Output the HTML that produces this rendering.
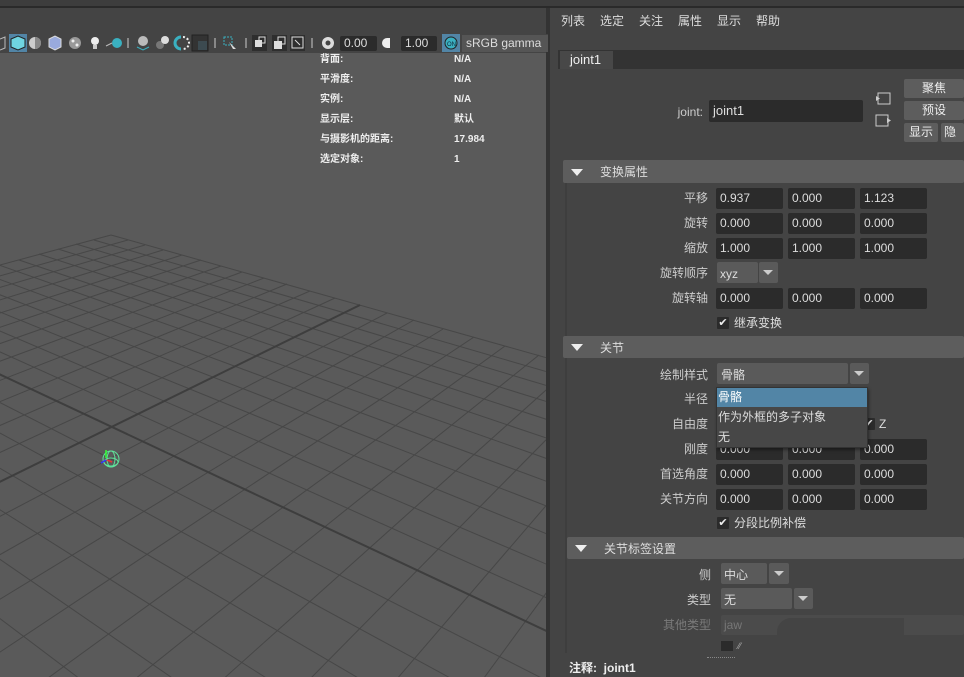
<!DOCTYPE html>
<html style="overflow:hidden;width:964px;height:677px"><head><meta charset="utf-8"><style>
*{margin:0;padding:0;box-sizing:border-box}
body{width:964px;height:677px;overflow:hidden;background:#444;font-family:"Liberation Sans","Noto Sans CJK SC",sans-serif;font-size:12px;color:#ddd;position:relative}
.a{position:absolute}
.t{position:absolute;white-space:nowrap;line-height:14px}
.f{position:absolute;background:#2b2b2b;height:21px;border-radius:2px;color:#ddd;padding:3px 4px;line-height:15px}
.lbl{position:absolute;text-align:right;width:120px;line-height:14px;color:#ccc}
.hud{position:absolute;font-size:10px;font-weight:bold;color:#eee;line-height:12px;white-space:nowrap}
.hdr{position:absolute;background:#5d5d5d;height:22px;border-radius:2px}
.tri{position:absolute;width:0;height:0;border-left:6px solid transparent;border-right:6px solid transparent;border-top:7px solid #eee}
.btn{position:absolute;background:#5d5d5d;border-radius:2px;text-align:center;line-height:19px;color:#eee}
.dd{position:absolute;background:#5a5a5a;height:21px;border-radius:2px}
.cb{position:absolute;width:12px;height:12px;background:#2b2b2b;border-radius:1px;color:#eee;font-size:11px;line-height:12px;text-align:center}
</style></head><body>
<div class="a" style="left:0;top:0;width:964px;height:6px;background:#3d3d3d"></div>
<div class="a" style="left:0;top:6px;width:964px;height:2px;background:#2a2a2a"></div>
<div class="a" style="left:0;top:8px;width:548px;height:45px;background:#444"></div>
<div class="a" style="left:0;top:53px;width:546px;height:624px;background:#5a5a5a"></div>
<svg class="a" style="left:0;top:0" width="546" height="677">
<defs><clipPath id="c"><rect x="0" y="53" width="546" height="624"/></clipPath></defs>
<g clip-path="url(#c)" stroke="#474747" stroke-width="1" fill="none">
<line x1="111" y1="235" x2="-625" y2="434"/><line x1="128" y1="240" x2="-617" y2="449"/><line x1="145" y1="245" x2="-608" y2="465"/><line x1="163" y1="250" x2="-599" y2="483"/><line x1="182" y1="255" x2="-590" y2="501"/><line x1="201" y1="260" x2="-579" y2="521"/><line x1="221" y1="266" x2="-568" y2="543"/><line x1="242" y1="272" x2="-556" y2="566"/><line x1="264" y1="278" x2="-543" y2="591"/><line x1="287" y1="284" x2="-528" y2="618"/><line x1="310" y1="291" x2="-513" y2="648"/><line x1="335" y1="298" x2="-496" y2="681"/>
<line x1="387" y1="313" x2="-456" y2="756"/><line x1="414" y1="320" x2="-433" y2="800"/><line x1="443" y1="329" x2="-408" y2="848"/><line x1="474" y1="337" x2="-379" y2="904"/><line x1="505" y1="346" x2="-347" y2="965"/><line x1="539" y1="355" x2="-310" y2="1036"/><line x1="574" y1="365" x2="-267" y2="1118"/><line x1="610" y1="375" x2="-217" y2="1213"/><line x1="649" y1="386" x2="-159" y2="1325"/><line x1="689" y1="398" x2="-88" y2="1459"/><line x1="732" y1="410" x2="-3" y2="1621"/><line x1="778" y1="423" x2="103" y2="1824"/>
<line x1="111" y1="235" x2="778" y2="423"/><line x1="94" y1="240" x2="771" y2="437"/><line x1="76" y1="244" x2="764" y2="451"/><line x1="58" y1="249" x2="756" y2="467"/><line x1="39" y1="254" x2="748" y2="485"/><line x1="19" y1="260" x2="739" y2="503"/><line x1="-1" y1="265" x2="729" y2="523"/><line x1="-23" y1="271" x2="719" y2="545"/><line x1="-46" y1="277" x2="707" y2="568"/><line x1="-69" y1="284" x2="695" y2="594"/><line x1="-94" y1="291" x2="682" y2="622"/><line x1="-120" y1="298" x2="667" y2="652"/>
<line x1="-176" y1="313" x2="632" y2="724"/><line x1="-206" y1="321" x2="612" y2="766"/><line x1="-238" y1="329" x2="589" y2="813"/><line x1="-272" y1="338" x2="564" y2="866"/><line x1="-307" y1="348" x2="534" y2="927"/><line x1="-345" y1="358" x2="501" y2="997"/><line x1="-384" y1="369" x2="461" y2="1079"/><line x1="-426" y1="380" x2="415" y2="1175"/><line x1="-471" y1="392" x2="360" y2="1289"/><line x1="-519" y1="405" x2="293" y2="1429"/><line x1="-570" y1="419" x2="209" y2="1602"/>
</g>
<g clip-path="url(#c)" stroke="#3e3e3e" stroke-width="2">
<line x1="360" y1="305" x2="-477" y2="716"/><line x1="-148" y1="305" x2="651" y2="680"/>
</g>
<g fill="none" stroke="#5fe39a" stroke-width="1">
<circle cx="111" cy="459" r="8"/><ellipse cx="111" cy="459" rx="4" ry="8"/><ellipse cx="111" cy="462" rx="7" ry="4"/>
</g>
<line x1="106" y1="458" x2="106" y2="450" stroke="#3f3" stroke-width="1.5"/>
<line x1="106" y1="460" x2="101" y2="463" stroke="#33f" stroke-width="1.5"/>
<line x1="107" y1="460" x2="112" y2="462" stroke="#e33" stroke-width="1.5"/>
</svg>
<div class="a" style="left:546px;top:8px;width:4px;height:669px;background:#333"></div>
<div class="a" style="left:0;top:34px;width:548px;height:18px;background:#444"></div>
<svg class="a" style="left:0;top:34px" width="548" height="18">
<path d="M0 5 L5 3 L5 14 L0 16" fill="none" stroke="#bbb"/>
<rect x="9" y="0" width="18" height="18" fill="#5285a6"/>
<path d="M11 5 L18 2 L25 5 L25 13 L18 16 L11 13Z" fill="#6fd4e0" stroke="#222"/>
<circle cx="35" cy="9" r="6" fill="#ccc"/><path d="M35 3 A6 6 0 0 1 35 15Z" fill="#888"/>
<path d="M49 5 L55 2 L61 5 L61 13 L55 16 L49 13Z" fill="#9ad" stroke="#ddd"/>
<circle cx="75" cy="9" r="6" fill="#999"/><circle cx="73" cy="7" r="1.5" fill="#eee"/><circle cx="77" cy="11" r="1.5" fill="#eee"/>
<circle cx="95" cy="7" r="4" fill="#eee"/><rect x="93" y="11" width="4" height="4" fill="#ccc"/>
<circle cx="117" cy="9" r="5" fill="#3ab0c0"/><path d="M106 12 L112 9" stroke="#bbb"/>
<rect x="127" y="4" width="2" height="10" fill="#888"/>
<circle cx="143" cy="7" r="5" fill="#bbb"/><path d="M137 13 L143 16 L149 13" stroke="#3ab0c0" fill="none"/>
<circle cx="160" cy="11" r="4" fill="#777"/><circle cx="165" cy="6" r="4" fill="#ddd"/>
<path d="M181 3 A6 6 0 1 0 181 15" fill="none" stroke="#3ab0c0" stroke-width="3"/><path d="M183 3 A6 6 0 0 1 183 15" fill="none" stroke="#eee" stroke-width="2" stroke-dasharray="2 2"/>
<rect x="192" y="1" width="16" height="16" fill="#333" stroke="#222"/><rect x="198" y="7" width="9" height="9" fill="#3c4a50"/>
<rect x="214" y="4" width="2" height="10" fill="#888"/>
<rect x="224" y="3" width="8" height="8" fill="none" stroke="#3ab0c0" stroke-dasharray="2 1"/><path d="M229 8 L236 15 L233 15Z" fill="#ddd"/>
<rect x="245" y="4" width="2" height="10" fill="#888"/>
<rect x="252" y="1" width="15" height="16" fill="#2e2e2e"/><rect x="255" y="6" width="7" height="7" fill="#ddd"/><rect x="259" y="3" width="6" height="6" fill="none" stroke="#ddd"/>
<rect x="272" y="1" width="15" height="16" fill="#2e2e2e"/><rect x="274" y="7" width="8" height="8" fill="#ddd"/><rect x="278" y="3" width="7" height="7" fill="none" stroke="#ddd"/>
<rect x="290" y="1" width="15" height="16" fill="#2e2e2e"/><rect x="292" y="3" width="11" height="11" fill="none" stroke="#ddd"/><path d="M295 6 L300 11" stroke="#ddd"/>
<rect x="311" y="4" width="2" height="10" fill="#888"/>
<circle cx="328" cy="9" r="6" fill="#ddd"/><circle cx="328" cy="9" r="2.5" fill="#444"/>
<rect x="340" y="2" width="37" height="15" rx="2" fill="#2b2b2b"/>
<path d="M387 4 L390 4 L390 14 L387 14 A5 5 0 0 1 387 4Z" fill="#eee"/>
<rect x="401" y="2" width="36" height="15" rx="2" fill="#2b2b2b"/>
<rect x="442" y="0" width="18" height="18" fill="#5285a6"/><circle cx="451" cy="9" r="6" fill="#3ab0c0" stroke="#222"/>
<rect x="462" y="1" width="86" height="17" fill="#555"/>
</svg>
<div class="t" style="left:344px;top:36px;font-size:12px;color:#ddd">0.00</div>
<div class="t" style="left:405px;top:36px;font-size:12px;color:#ddd">1.00</div>
<div class="t" style="left:447px;top:38px;font-size:6px;color:#123">ON</div>
<div class="t" style="left:466px;top:36px;font-size:12px;color:#ddd">sRGB gamma</div>
<div class="hud" style="left:320px;top:54px">背面:</div><div class="hud" style="left:454px;top:54px">N/A</div>
<div class="hud" style="left:320px;top:74px">平滑度:</div><div class="hud" style="left:454px;top:74px">N/A</div>
<div class="hud" style="left:320px;top:94px">实例:</div><div class="hud" style="left:454px;top:94px">N/A</div>
<div class="hud" style="left:320px;top:114px">显示层:</div><div class="hud" style="left:454px;top:114px">默认</div>
<div class="hud" style="left:320px;top:134px">与摄影机的距离:</div><div class="hud" style="left:454px;top:134px">17.984</div>
<div class="hud" style="left:320px;top:154px">选定对象:</div><div class="hud" style="left:454px;top:154px">1</div>

<div class="t" style="left:561px;top:14px">列表</div>
<div class="t" style="left:600px;top:14px">选定</div>
<div class="t" style="left:639px;top:14px">关注</div>
<div class="t" style="left:678px;top:14px">属性</div>
<div class="t" style="left:717px;top:14px">显示</div>
<div class="t" style="left:756px;top:14px">帮助</div>
<div class="a" style="left:558px;top:50px;width:406px;height:19px;background:#333"></div>
<div class="a" style="left:560px;top:51px;width:53px;height:18px;background:#484848"></div>
<div class="t" style="left:570px;top:53px;font-size:13px;color:#eee">joint1</div>
<div class="lbl" style="left:583px;top:105px">joint:</div>
<div class="f" style="left:709px;top:100px;width:154px;height:22px;font-size:13px">joint1</div>
<svg class="a" style="left:874px;top:90px" width="20" height="40">
<rect x="4" y="3" width="12" height="11" fill="none" stroke="#ccc"/><path d="M2 6 L6 8.5 L2 11Z" fill="#ccc"/>
<rect x="2" y="25" width="12" height="11" fill="none" stroke="#ccc"/><path d="M13 28 L17 30.5 L13 33Z" fill="#ccc"/>
</svg>
<div class="btn" style="left:904px;top:79px;width:60px;height:19px">聚焦</div>
<div class="btn" style="left:904px;top:101px;width:60px;height:19px">预设</div>
<div class="btn" style="left:904px;top:123px;width:34px;height:19px">显示</div>
<div class="btn" style="left:941px;top:123px;width:23px;height:19px;text-align:left;padding-left:3px;overflow:hidden">隐藏</div>

<div class="a" style="left:565px;top:183px;width:2px;height:470px;background:#3e3e3e"></div>
<div class="hdr" style="left:563px;top:160px;width:401px;height:23px"></div>
<div class="tri" style="left:571px;top:169px"></div>
<div class="t" style="left:600px;top:165px;color:#ddd">变换属性</div>

<div class="lbl" style="left:588px;top:191px">平移</div>
<div class="f" style="left:716px;top:188px;width:67px">0.937</div><div class="f" style="left:788px;top:188px;width:67px">0.000</div><div class="f" style="left:860px;top:188px;width:67px">1.123</div>
<div class="lbl" style="left:588px;top:216px">旋转</div>
<div class="f" style="left:716px;top:213px;width:67px">0.000</div><div class="f" style="left:788px;top:213px;width:67px">0.000</div><div class="f" style="left:860px;top:213px;width:67px">0.000</div>
<div class="lbl" style="left:588px;top:241px">缩放</div>
<div class="f" style="left:716px;top:238px;width:67px">1.000</div><div class="f" style="left:788px;top:238px;width:67px">1.000</div><div class="f" style="left:860px;top:238px;width:67px">1.000</div>
<div class="lbl" style="left:588px;top:266px">旋转顺序</div>
<div class="dd" style="left:717px;top:262px;width:41px"></div><div class="dd" style="left:759px;top:262px;width:19px"></div>
<div class="t" style="left:720px;top:267px">xyz</div>
<div class="tri" style="left:763px;top:270px;border-left-width:5px;border-right-width:5px;border-top-width:5px;border-top-color:#ccc"></div>
<div class="lbl" style="left:588px;top:291px">旋转轴</div>
<div class="f" style="left:716px;top:288px;width:67px">0.000</div><div class="f" style="left:788px;top:288px;width:67px">0.000</div><div class="f" style="left:860px;top:288px;width:67px">0.000</div>
<div class="cb" style="left:717px;top:317px">✔</div><div class="t" style="left:734px;top:316px">继承变换</div>

<div class="hdr" style="left:563px;top:336px;width:401px;height:22px"></div>
<div class="tri" style="left:571px;top:344px"></div>
<div class="t" style="left:600px;top:341px">关节</div>
<div class="lbl" style="left:588px;top:368px">绘制样式</div>
<div class="dd" style="left:717px;top:363px;width:131px"></div><div class="dd" style="left:850px;top:363px;width:19px"></div>
<div class="t" style="left:721px;top:368px">骨骼</div>
<div class="tri" style="left:854px;top:371px;border-left-width:5px;border-right-width:5px;border-top-width:5px;border-top-color:#ccc"></div>
<div class="lbl" style="left:588px;top:392px">半径</div>
<div class="lbl" style="left:588px;top:417px">自由度</div>
<div class="cb" style="left:863px;top:418px">✔</div><div class="t" style="left:879px;top:417px">Z</div>
<div class="lbl" style="left:588px;top:442px">刚度</div>
<div class="f" style="left:716px;top:439px;width:67px">0.000</div><div class="f" style="left:788px;top:439px;width:67px">0.000</div><div class="f" style="left:860px;top:439px;width:67px">0.000</div>
<div class="lbl" style="left:588px;top:467px">首选角度</div>
<div class="f" style="left:716px;top:464px;width:67px">0.000</div><div class="f" style="left:788px;top:464px;width:67px">0.000</div><div class="f" style="left:860px;top:464px;width:67px">0.000</div>
<div class="lbl" style="left:588px;top:492px">关节方向</div>
<div class="f" style="left:716px;top:489px;width:67px">0.000</div><div class="f" style="left:788px;top:489px;width:67px">0.000</div><div class="f" style="left:860px;top:489px;width:67px">0.000</div>
<div class="cb" style="left:717px;top:517px">✔</div><div class="t" style="left:734px;top:516px">分段比例补偿</div>
<div class="a" style="left:716px;top:387px;width:152px;height:61px;background:#474747;border:1px solid #333;box-shadow:1px 2px 3px rgba(0,0,0,.4)"></div>
<div class="a" style="left:717px;top:388px;width:150px;height:19px;background:#5285a6"></div>
<div class="t" style="left:718px;top:390px;color:#fff">骨骼</div>
<div class="t" style="left:718px;top:410px">作为外框的多子对象</div>
<div class="t" style="left:718px;top:430px">无</div>

<div class="hdr" style="left:567px;top:537px;width:397px;height:22px"></div>
<div class="tri" style="left:575px;top:545px"></div>
<div class="t" style="left:604px;top:542px">关节标签设置</div>
<div class="lbl" style="left:591px;top:568px">侧</div>
<div class="dd" style="left:721px;top:563px;width:46px"></div><div class="dd" style="left:769px;top:563px;width:20px"></div>
<div class="t" style="left:724px;top:568px">中心</div>
<div class="tri" style="left:774px;top:571px;border-left-width:5px;border-right-width:5px;border-top-width:5px;border-top-color:#ccc"></div>
<div class="lbl" style="left:591px;top:593px">类型</div>
<div class="dd" style="left:721px;top:588px;width:71px"></div><div class="dd" style="left:794px;top:588px;width:19px"></div>
<div class="t" style="left:724px;top:593px">无</div>
<div class="tri" style="left:798px;top:596px;border-left-width:5px;border-right-width:5px;border-top-width:5px;border-top-color:#ccc"></div>
<div class="lbl" style="left:591px;top:618px;color:#7a7a7a">其他类型</div>
<div class="a" style="left:721px;top:615px;width:243px;height:20px;background:#4b4b4b;border-radius:2px"></div>
<div class="a" style="left:777px;top:618px;width:127px;height:17px;background:#444;border-radius:14px 0 0 0"></div>
<div class="t" style="left:724px;top:618px;color:#777">jaw</div>
<div class="a" style="left:721px;top:641px;width:12px;height:10px;background:#2b2b2b"></div>
<div class="t" style="left:738px;top:639px;font-size:9px;color:#aaa">⁄⁄</div>
<div class="a" style="left:707px;top:657px;width:28px;border-top:1px dotted #888"></div>
<div class="t" style="left:569px;top:661px;font-weight:bold;color:#eee">注释:&nbsp; joint1</div>
</body></html>
